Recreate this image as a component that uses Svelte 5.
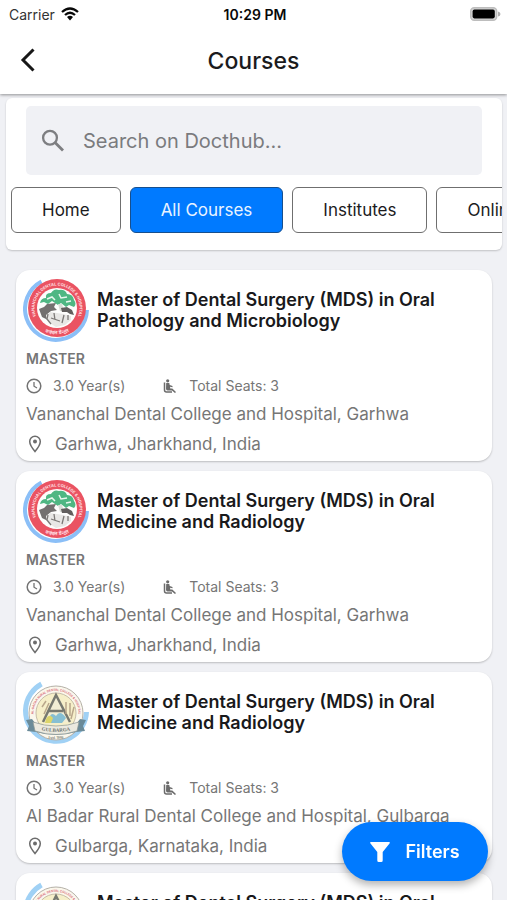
<script>
  const tabs = ['Home', 'All Courses', 'Institutes', 'Online'];
  let active = $state('All Courses');
  let query = $state('');

  const courses = [
    {
      title: 'Master of Dental Surgery (MDS) in Oral Pathology and Microbiology',
      institute: 'Vananchal Dental College and Hospital, Garhwa',
      place: 'Garhwa, Jharkhand, India',
      logo: 'vananchal'
    },
    {
      title: 'Master of Dental Surgery (MDS) in Oral Medicine and Radiology',
      institute: 'Vananchal Dental College and Hospital, Garhwa',
      place: 'Garhwa, Jharkhand, India',
      logo: 'vananchal'
    },
    {
      title: 'Master of Dental Surgery (MDS) in Oral Medicine and Radiology',
      institute: 'Al Badar Rural Dental College and Hospital, Gulbarga',
      place: 'Gulbarga, Karnataka, India',
      logo: 'albadar'
    },
    {
      title: 'Master of Dental Surgery (MDS) in Oral Pathology and Microbiology',
      institute: 'Al Badar Rural Dental College and Hospital, Gulbarga',
      place: 'Gulbarga, Karnataka, India',
      logo: 'albadar'
    }
  ];
</script>

{#snippet vananchal(id)}
  <svg class="logo" viewBox="0 0 66 66" aria-hidden="true">
    <path d="M18.500 4.500A31 31 0 1 0 64 33" fill="none" stroke="#8bbff7" stroke-width="4" />
    <circle cx="34" cy="31" r="29" fill="#ea5362" />
    <circle cx="34" cy="31" r="20" fill="#fdfdfc" />
    <path id="ring-{id}" d="M15.300 43.600A22.500 22.500 0 1 1 52.700 43.600" fill="none" />
    <path id="low-{id}" d="M14.800 49.200A26.500 26.500 0 0 0 53.200 49.200" fill="none" />
    <text class="ring-text"><textPath href="#ring-{id}" startOffset="50%" text-anchor="middle">VANANCHAL DENTAL COLLEGE &amp; HOSPITAL</textPath></text>
    <text class="low-text"><textPath href="#low-{id}" startOffset="50%" text-anchor="middle">वनांचल डेन्टल</textPath></text>
    <g transform="translate(0 -1)">
      <path d="M17 27Q18 22 23 22Q22 17 28 17Q31 12 36 14Q42 13 44 18Q50 18 51 24Q54 28 51 31L46 29L43 31L38 27L35 29L29 25L25 28L21 26Z" fill="#4fb783" />
      <path d="M24 23L29 21L32 24M36 18L38 22L44 21M43 26L48 25" stroke="#e8f7ee" stroke-width="1.500" fill="none" />
      <path d="M35 28L37 35L41 35L39 28Z" fill="#d9ddd6" />
      <path d="M16 33L21 31L24 28L33 27L31 31L34 34L28 35L23 39L25 44L19 41Z" fill="#73706f" />
      <path d="M38 32L44 31L49 34L51 39L47 38L44 36L39 36Z" fill="#625f5e" />
      <path d="M23 40L27 36L34 37L40 38L48 40L48 44L42 49L33 51L25 46Z" fill="#e8e7e5" />
      <path d="M25 38L24 43L28 48M31 37L32 44M41 39L39 47M45 39L45 44M28 42L37 45" stroke="#7c7977" stroke-width="1.300" fill="none" />
    </g>
  </svg>
{/snippet}

{#snippet albadar(id)}
  <svg class="logo" viewBox="0 0 66 66" aria-hidden="true">
    <path d="M18.500 5A30.500 30.500 0 1 0 63.500 33" fill="none" stroke="#a0d1f5" stroke-width="5" />
    <circle cx="33" cy="34" r="27" fill="#fbf7ec" stroke="#b5b1a8" stroke-width="1" />
    <circle cx="33" cy="34" r="20" fill="#f6efc9" stroke="#c7bea8" stroke-width="1" />
    <path id="ring-{id}" d="M11.500 41A22.500 22.500 0 1 1 54.500 41" fill="none" />
    <text class="ring-text pink"><textPath href="#ring-{id}" startOffset="50%" text-anchor="middle">AL-BADAR RURAL DENTAL COLLEGE &amp; HOSPITAL</textPath></text>
    <g transform="translate(-1 3)">
      <path d="M20 40L34 13L49 40Z" fill="#f2eed5" />
      <path d="M21 40L34 13L48 40M27 29H41" fill="none" stroke="#777970" stroke-width="2.500" />
      <path d="M20 25L24 19M22 32L27 21M44 20V32M48 21V34M52 25L49 37" stroke="#b9a78b" stroke-width="1.500" />
      <path d="M27 37Q29 29 34 34Q38 27 44 36L40 41H27Z" fill="#86bfd3" />
      <path d="M24 37Q27 31 31 36L29 41H23Z" fill="#dcd56b" />
    </g>
    <path d="M3 41L9 40L12 44Q33 51 54 44L57 40L63 41L60 47L62 52L53 53Q33 59 13 53L4 52L6 47Z" fill="#6b8b99" />
    <path d="M10 43Q33 51 56 43L54 52Q33 59 12 52Z" fill="#ebe9df" stroke="#8c9694" stroke-width=".700" />
    <path id="low-{id}" d="M13 50Q33 55.500 53 50" fill="none" />
    <text class="banner-text"><textPath href="#low-{id}" startOffset="50%" text-anchor="middle">GULBARGA</textPath></text>
    <text class="estd" x="33" y="59.500" text-anchor="middle">Estd. 1986</text>
  </svg>
{/snippet}

<div class="app">
  <div class="status">
    <span class="carrier">Carrier
      <svg width="18" height="14" viewBox="0 0 18 14" aria-hidden="true">
        <path d="M1 5Q9-2 17 5M4 8Q9 3.500 14 8" fill="none" stroke="#080808" stroke-width="2.300" />
        <path d="M6 10Q9 7.500 12 10L9 13.500Z" fill="#080808" />
      </svg>
    </span>
    <strong>10:29 PM</strong>
    <span class="battery">
      <svg width="31" height="14" viewBox="0 0 31 14" aria-hidden="true">
        <rect x=".700" y=".700" width="26" height="12.600" rx="3.500" fill="#d4d4d4" stroke="#bdbdbd" stroke-width="1.400" />
        <rect x="2.600" y="2.600" width="22.200" height="8.800" rx="1.800" fill="#000" />
        <path d="M28 4.500Q30.500 5 30.500 7T28 9.500Z" fill="#b0b0b0" />
      </svg>
    </span>
  </div>

  <header>
    <button class="back" aria-label="Back">
      <svg width="16" height="26" viewBox="0 0 16 26" aria-hidden="true">
        <path d="M13.500 1.500L3 12L13.500 22.500" fill="none" stroke="#171717" stroke-width="3" />
      </svg>
    </button>
    <h1>Courses</h1>
  </header>

  <main>
    <section class="panel">
      <label class="search">
        <svg width="24" height="24" viewBox="0 0 24 24" aria-hidden="true">
          <circle cx="9" cy="8.700" r="6.900" fill="none" stroke="#7d7e81" stroke-width="2.300" />
          <path d="M14 13.500L22 21.500" stroke="#7d7e81" stroke-width="2.800" />
        </svg>
        <input type="text" aria-label="Search" placeholder="Search on Docthub..." bind:value={query} />
      </label>
      <nav class="tabs">
        {#each tabs as tab}
          <button class="tab" class:active={tab === active} onclick={() => (active = tab)}>{tab}</button>
        {/each}
      </nav>
    </section>

    <div class="list">
      {#each courses as course, i}
        <article>
          <div class="top">
            {#if course.logo === 'vananchal'}
              {@render vananchal(i)}
            {:else}
              {@render albadar(i)}
            {/if}
            <h2>{course.title}</h2>
          </div>
          <p class="level">MASTER</p>
          <div class="facts">
            <span class="years">
              <svg width="16" height="16" viewBox="0 0 16 16" aria-hidden="true">
                <circle cx="8" cy="8" r="6.800" fill="none" stroke="#737373" stroke-width="1.500" />
                <path d="M8 4V8.200L11 10" fill="none" stroke="#737373" stroke-width="1.300" />
              </svg>
              3.0 Year(s)
            </span>
            <span class="seats">
              <svg width="14" height="16" viewBox="0 0 14 16" aria-hidden="true">
                <circle cx="4.700" cy="2.800" r="1.600" fill="#6c6c6c" />
                <path d="M3.200 5H6.300L6.700 7L9.500 8V9.200L7 8.800L7.300 10.500H9.300L13 14L12 15L9 12.500H4.500Q3 12.500 3 10.500Z" fill="#6c6c6c" />
                <path d="M1.500 4.500V12Q1.500 14 3.500 14H9" fill="none" stroke="#6c6c6c" stroke-width="1.500" />
              </svg>
              Total Seats: 3
            </span>
          </div>
          <p class="institute">{course.institute}</p>
          <p class="place">
            <svg width="14" height="18" viewBox="0 0 14 18" aria-hidden="true">
              <path d="M7 16.500C4.500 13.500 1.700 9.800 1.700 6.500A5.300 5.300 0 0 1 12.300 6.500C12.300 9.800 9.500 13.500 7 16.500Z" fill="none" stroke="#6c6c6c" stroke-width="1.500" />
              <circle cx="7" cy="6.500" r="2" fill="#6c6c6c" />
            </svg>
            {course.place}
          </p>
        </article>
      {/each}
    </div>
  </main>

  <button class="filters">
    <svg width="20" height="20" viewBox="0 0 20 20" aria-hidden="true">
      <path d="M1 0H19Q20.500 0 19.500 1.500L12.700 10V18.500Q12.700 20 11.200 20H8.800Q7.300 20 7.300 18.500V10L.500 1.500Q-.500 0 1 0Z" fill="#fff" />
    </svg>
    Filters
  </button>
</div>

<style>
  :global(body) {
    margin: 0;
    background: #f0f1f5;
  }
  .app {
    display: flex;
    flex-direction: column;
    height: 100vh;
    overflow: hidden;
    background: #f0f1f5;
    color: #1b1b1d;
    font-family: Inter, Roboto, sans-serif;
  }
  button, input {
    font-family: inherit;
    color: inherit;
  }
  svg {
    display: block;
    flex: none;
  }
  h1, h2, p {
    margin: 0;
  }
  .status {
    position: relative;
    z-index: 2;
    display: grid;
    grid-template-columns: 1fr auto 1fr;
    align-items: center;
    height: 28px;
    flex: none;
    padding: 0 6px 0 9px;
    background: #fff;
    font-size: 14px;
  }
  .status strong {
    font-weight: 600;
    color: #080808;
  }
  .carrier {
    display: flex;
    align-items: center;
    gap: 6px;
    color: #333;
  }
  .battery {
    justify-self: end;
  }
  header {
    position: relative;
    z-index: 1;
    display: grid;
    grid-template-columns: 1fr auto 1fr;
    align-items: center;
    height: 66px;
    flex: none;
    background: #fff;
    box-shadow: 0 1px 3px rgba(0, 0, 0, 0.4);
  }
  .back {
    justify-self: start;
    margin-left: 10px;
    padding: 8px 10px;
    border: 0;
    background: none;
  }
  h1 {
    font-size: 23px;
    line-height: 32px;
    font-weight: 500;
  }
  main {
    flex: 1;
    min-height: 0;
    overflow-y: auto;
    scrollbar-width: none;
  }
  .panel {
    margin: 4px 5px 0 6px;
    padding: 8px 0 17px;
    border-radius: 6px;
    background: #fff;
    box-shadow: 0 1px 2px rgba(0, 0, 0, 0.2);
  }
  .search {
    display: flex;
    align-items: center;
    gap: 18px;
    height: 69px;
    margin: 0 20px;
    padding: 0 15px;
    border-radius: 5px;
    background: #f0f1f5;
  }
  input {
    flex: 1;
    min-width: 0;
    padding: 0;
    border: 0;
    outline: 0;
    background: none;
    font-size: 20px;
  }
  input::placeholder {
    color: #7a7b7e;
    opacity: 1;
  }
  .tabs {
    display: flex;
    gap: 9px;
    margin-top: 12px;
    padding-left: 5px;
    overflow-x: auto;
    scrollbar-width: none;
  }
  .tab {
    flex: none;
    height: 46px;
    padding: 0 30px;
    border: 1px solid #6f6f6f;
    border-radius: 6px;
    background: #fff;
    font-size: 17px;
  }
  .tab.active {
    border-color: #174f8e;
    background: #007aff;
    color: #e9f3ff;
  }
  .list {
    display: flex;
    flex-direction: column;
    gap: 10px;
    padding: 20px 15px 10px 16px;
  }
  article {
    padding: 7px 8px 5px 10px;
    border-radius: 14px;
    background: #fff;
    box-shadow: 0 1px 2px rgba(0, 0, 0, 0.22);
    color: #767676;
  }
  .top {
    display: flex;
    align-items: center;
    gap: 8px;
    margin-left: -3px;
  }
  .logo {
    width: 66px;
    height: 66px;
  }
  h2 {
    max-width: 350px;
    color: #19191b;
    font-size: 18px;
    line-height: 21px;
    font-weight: 600;
  }
  .level {
    margin-top: 5px;
    font-size: 14px;
    line-height: 22px;
    font-weight: 600;
  }
  .facts {
    display: flex;
    gap: 38px;
    margin-top: 5px;
    font-size: 14px;
    line-height: 22px;
  }
  .facts span {
    display: flex;
    align-items: center;
  }
  .years {
    gap: 11px;
  }
  .seats {
    gap: 12px;
  }
  .institute {
    margin-top: 5px;
    font-size: 17px;
    line-height: 24px;
  }
  .place {
    display: flex;
    align-items: center;
    gap: 13px;
    margin-top: 6px;
    padding-left: 2px;
    font-size: 17px;
    line-height: 24px;
  }
  .filters {
    position: fixed;
    right: 19px;
    bottom: 19px;
    z-index: 2;
    display: flex;
    align-items: center;
    justify-content: center;
    gap: 15px;
    width: 146px;
    height: 59px;
    padding: 0;
    border: 0;
    border-radius: 30px;
    background: #007aff;
    box-shadow: 0 4px 8px rgba(0, 0, 0, 0.3);
    color: #fff;
    font-size: 18px;
    font-weight: 600;
  }
  .ring-text {
    font-size: 4px;
    font-weight: 700;
    fill: #ffe0e3;
  }
  .ring-text.pink {
    font-size: 3px;
    fill: #d8707c;
  }
  .low-text {
    font-size: 5px;
    font-weight: 700;
    fill: #ffdfe2;
  }
  .banner-text {
    font-family: "Liberation Serif", serif;
    font-size: 5px;
    font-weight: 700;
    fill: #686d69;
  }
  .estd {
    font-size: 3px;
    font-weight: 600;
    fill: #77776f;
  }
</style>
